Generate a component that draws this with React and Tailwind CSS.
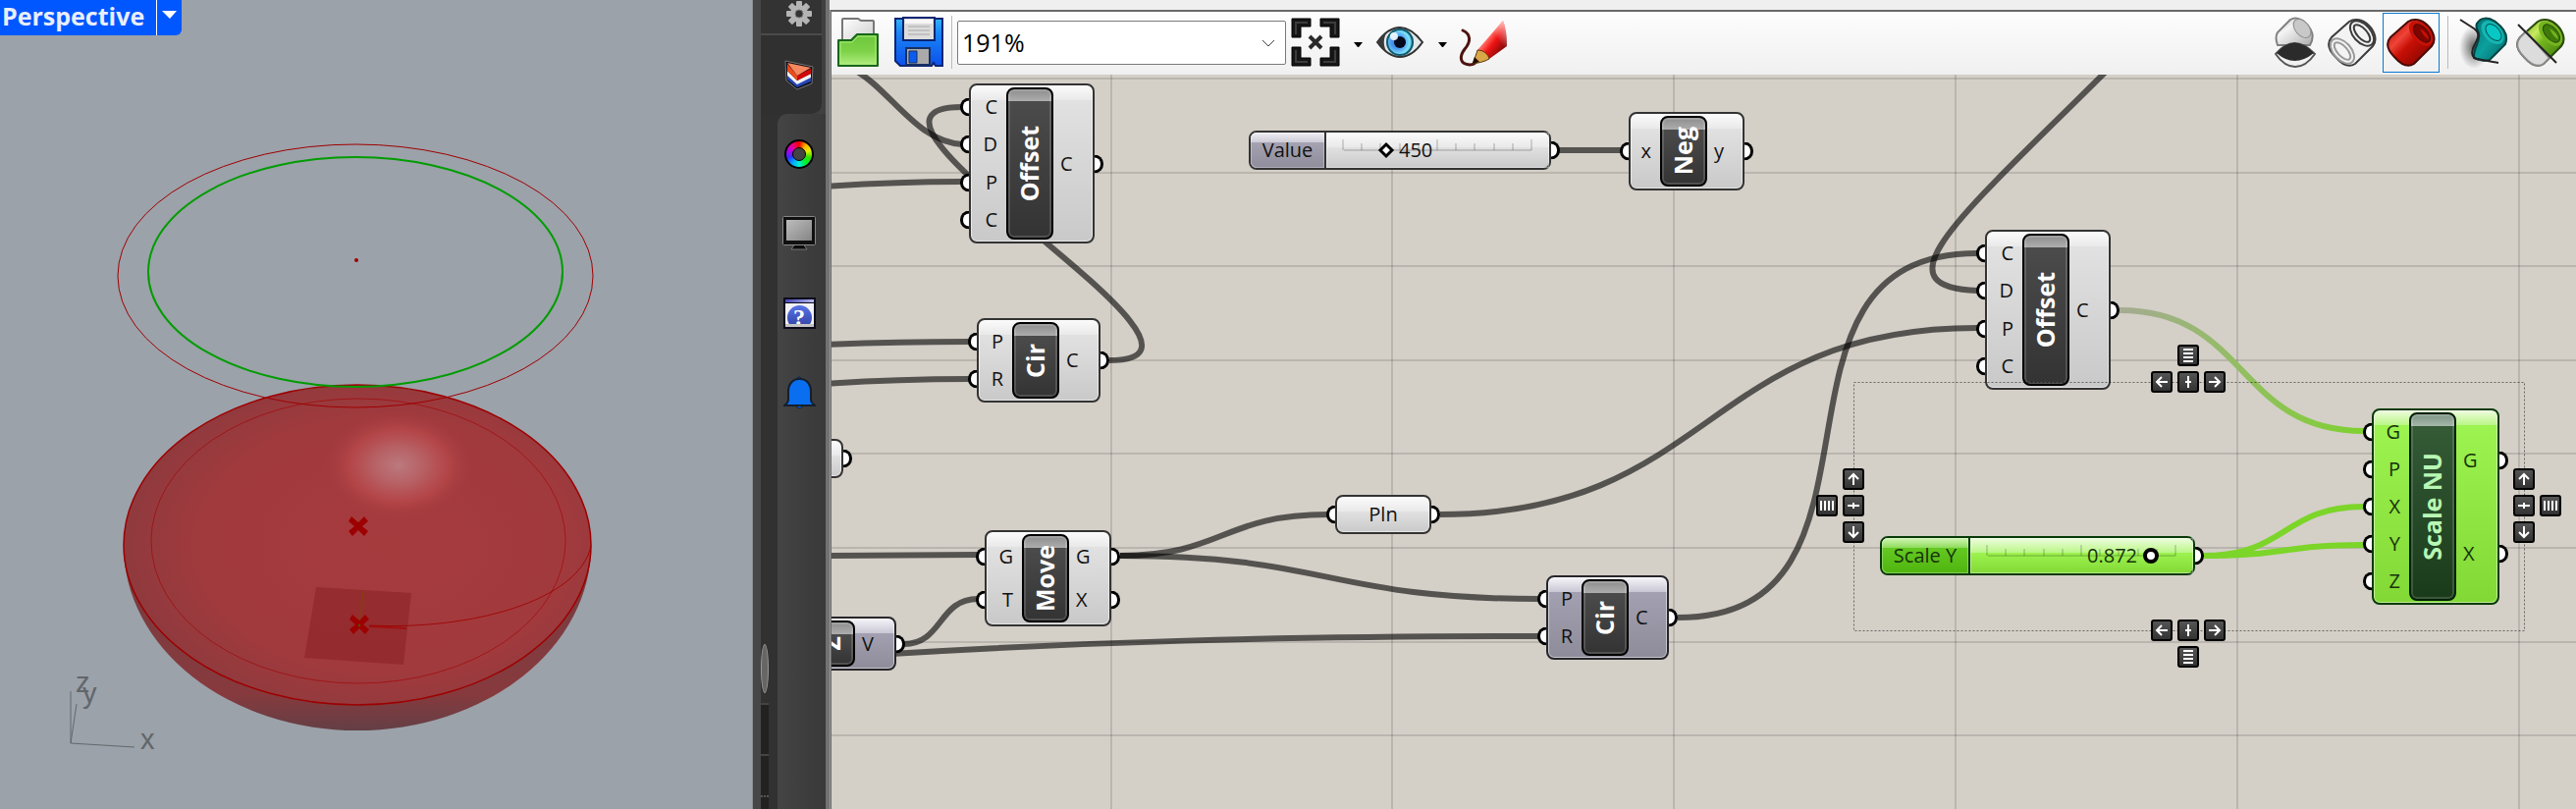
import React from "react";

/* ---------- perspective viewport ---------- */

function Cross({ x, y }) {
  return (
    <path
      transform={`translate(${x} ${y})`}
      d="M-7 -10 L-10 -5 L-4 0 L-10 5 L-6 10 L0 4 L6 10 L10 5 L4 0 L10 -5 L6 -10 L0 -4Z"
      fill="#9d0000"
    />
  );
}

function Viewport() {
  return (
    <section className="relative min-w-0 overflow-hidden bg-[#9ba2aa]">
      <svg viewBox="0 0 766 824" preserveAspectRatio="xMinYMin meet" className="h-full w-full" role="img" aria-label="Perspective scene">
        <defs>
          <linearGradient id="bowl" x1="0" y1="0" x2="0" y2="1">
            <stop offset="0" stopColor="#743c41" />
            <stop offset="0.5" stopColor="#803b3f" />
            <stop offset="0.8" stopColor="#873a3d" />
            <stop offset="1" stopColor="#633f45" />
          </linearGradient>
          <radialGradient id="dome" cx="0.56" cy="0.5" r="0.56">
            <stop offset="0" stopColor="#a63b3e" />
            <stop offset="0.7" stopColor="#a13a3d" />
            <stop offset="1" stopColor="#8f3a3e" />
          </radialGradient>
          <radialGradient id="shine">
            <stop offset="0" stopColor="#bb7a7e" />
            <stop offset="0.35" stopColor="#b96468" stopOpacity="0.9" />
            <stop offset="0.65" stopColor="#b94a4d" stopOpacity="0.75" />
            <stop offset="1" stopColor="#a63b3e" stopOpacity="0" />
          </radialGradient>
        </defs>
        <path d="M126 556 A238 188 0 0 0 602 556Z" fill="url(#bowl)" />
        <ellipse cx="364" cy="555" rx="238" ry="163" fill="url(#dome)" stroke="#9d0000" strokeWidth="1.5" />
        <ellipse cx="406" cy="474" rx="76" ry="56" fill="url(#shine)" />
        <path d="M322 598 L419 604 L411 677 L310 670Z" fill="#8f2629" fillOpacity="0.7" />
        <path d="M370 602 L366 636" stroke="#8a3b18" strokeWidth="2" />
        <path d="M376 638 L414 640" stroke="#a01010" strokeWidth="2" />
        <g fill="none" stroke="#a00000">
          <ellipse cx="365" cy="551" rx="211" ry="145" strokeOpacity="0.6" />
          <path d="M376 637 C480 642 590 612 602 556" strokeOpacity="0.85" />
          <ellipse cx="362" cy="281" rx="242" ry="134" />
        </g>
        <ellipse cx="362" cy="277" rx="211" ry="117" fill="none" stroke="#009c00" strokeWidth="2" />
        <circle cx="363" cy="265" r="2" fill="#9d0000" />
        <Cross x={365} y={536} />
        <Cross x={366} y={636} />
        <circle cx="366" cy="637" r="1" fill="#1b8000" />
        <path d="M72 704 V757 L137 761 M78 717 L72 757" fill="none" stroke="#63686c" />
        <g fill="#62666a" fontFamily="'Liberation Sans', sans-serif" fontSize="29">
          <text x="77" y="705">z</text>
          <text x="84" y="716">y</text>
          <text x="143" y="763">x</text>
        </g>
      </svg>
      <div className="absolute left-0 top-0 flex h-9 items-stretch rounded-br-md bg-[#0057ff]">
        <h1 className="w-[160px] border-r border-white pl-0.5 font-['Open_Sans',sans-serif] text-[25px] font-bold leading-[33px] text-[#e9eefa]">
          Perspective
        </h1>
        <button type="button" aria-label="Viewport menu" className="flex w-[25px] items-start justify-center pt-[11px]">
          <svg viewBox="0 0 15 8" className="h-2 w-[15px]">
            <path d="M0 0 H15 L8 8Z" fill="#fff" />
          </svg>
        </button>
      </div>
    </section>
  );
}

/* ---------- side tabs ---------- */

function GearIcon() {
  return (
    <svg viewBox="-14 -14 28 28" className="size-7">
      <g fill="#b4b4b4">
        {[0, 45, 90, 135].map((a) => (
          <rect key={a} x="-3" y="-13" width="6" height="26" rx="1" transform={`rotate(${a})`} />
        ))}
        <circle r="9" />
      </g>
      <circle r="4" fill="#333" stroke="#777" />
    </svg>
  );
}

function LayersIcon() {
  return (
    <svg viewBox="0 0 30 31" className="h-[31px] w-[30px]">
      <path d="M1 1 L29 7 L28 24 L13 30 L2 21Z" fill="#0b0b14" stroke="#777" />
      <path d="M3 15 L13 24 L27 18 V22 L13 28 L3 20Z" fill="#2546b4" />
      <path d="M3 11 L13 21 L27 14 V18 L13 25 L3 16Z" fill="#f2f2f2" />
      <path d="M13 16 L27 9 V14 L13 21Z" fill="#d40808" />
      <path d="M3 4 L13 16 V21 L3 11Z" fill="#f04a18" />
      <path d="M3 3 L27 8 L13 16Z" fill="#f4885e" />
    </svg>
  );
}

function WheelIcon() {
  return (
    <span className="block size-[30px] rounded-full border-2 border-black bg-[conic-gradient(from_0deg,#f00000,#ffb000,#e8f000,#30e000,#00f030,#00f0d0,#00a8ff,#3030ff,#b000f0,#f00080,#f00000)] p-[6px]">
      <span className="block size-full rounded-full border border-black bg-[#434343]" />
    </span>
  );
}

function MonitorIcon() {
  return (
    <svg viewBox="0 0 34 35" className="h-[35px] w-[34px]">
      <defs>
        <linearGradient id="screen" x1="0" y1="0" x2="1" y2="1">
          <stop offset="0" stopColor="#bdbdbd" />
          <stop offset="1" stopColor="#858585" />
        </linearGradient>
      </defs>
      <path d="M13 28 H21 L25 34 H9Z" fill="#0c0c0c" stroke="#777" />
      <rect x="0.5" y="0.5" width="33" height="29" rx="1" fill="#101010" stroke="#888" />
      <rect x="4" y="4" width="26" height="21" fill="url(#screen)" />
    </svg>
  );
}

function HelpIcon() {
  return (
    <span className="relative block h-8 w-[33px] overflow-hidden border-2 border-[#0c0c1c] bg-[#f2f2f6]">
      <span className="block h-1 border-b border-[#0c0c1c] bg-linear-to-r from-[#4b46b4] to-[#b9b8ec]" />
      <span className="absolute left-0.5 top-1.5 flex size-[25px] items-center justify-center rounded-full bg-linear-to-b from-[#5a74e8] to-[#2c3c9c] font-['Liberation_Serif',serif] text-[24px] font-bold leading-none text-white">
        ?
      </span>
      <span className="absolute inset-x-0 bottom-0 h-[3px] bg-[#c4c4c4]" />
    </span>
  );
}

function BellIcon() {
  return (
    <svg viewBox="0 0 33 34" className="h-[34px] w-[33px]">
      <circle cx="16" cy="3" r="2" fill="#0a6ef0" stroke="#0a1c33" />
      <path d="M12 30 Q16 35 21 30Z" fill="#0a6ef0" stroke="#0a1c33" />
      <path
        d="M16 3 C9 3 5 9 5 15 V24 Q5 27 1 30 H32 Q28 27 28 24 V15 C28 9 24 3 17 3Z"
        fill="#0a6ef0"
        stroke="#14202e"
        strokeWidth="2"
      />
    </svg>
  );
}

function SideTabs() {
  const tabs = [
    ["Materials", WheelIcon],
    ["Display", MonitorIcon],
    ["Help", HelpIcon],
    ["Notifications", BellIcon],
  ];
  return (
    <aside className="flex overflow-hidden border-l border-[#8a8d90] bg-[#474747]">
      <div className="ml-2 flex w-[66px] flex-col bg-[#404040]">
        <button type="button" aria-label="Settings" className="flex h-9 w-[62px] shrink-0 items-start justify-center border-b-2 border-[#4a4a4a] bg-[#333] pl-4">
          <GearIcon />
        </button>
        <div className="flex flex-1 flex-col bg-[#313131]">
          <div className="bg-[#404040]">
            <button type="button" aria-label="Layers" className="flex h-20 w-[62px] items-center justify-center rounded-br-[10px] bg-[#303030] pl-4">
              <LayersIcon />
            </button>
          </div>
          <div className="flex flex-1">
            <div className="flex w-[17px] shrink-0 flex-col justify-end">
              <span className="mb-2.5 h-[50px] w-2 rounded-[50%] border border-[#999] bg-[#666]" />
              <span className="h-[52px] w-2 border-t-2 border-[#444] bg-[#222]" />
              <span className="h-[56px] w-2 border-t-2 border-[#444] bg-[#222] pt-10">
                <span className="block border-t-2 border-dotted border-[#555]" />
              </span>
            </div>
            <nav className="flex flex-1 flex-col rounded-tl-[10px] bg-linear-to-r from-[#444] to-[#393939] pr-[5px]">
              {tabs.map(([label, Icon]) => (
                <button key={label} type="button" aria-label={label} className="flex h-[81px] items-center justify-center">
                  <Icon />
                </button>
              ))}
            </nav>
          </div>
        </div>
      </div>
      <div className="w-1 bg-[#727272]" />
    </aside>
  );
}

/* ---------- toolbar ---------- */

function OpenIcon() {
  return (
    <svg viewBox="0 0 44 52" className="h-[52px] w-11">
      <defs>
        <linearGradient id="folder" x1="0" y1="0" x2="0" y2="1">
          <stop offset="0" stopColor="#6cc63c" />
          <stop offset="0.55" stopColor="#7fd348" />
          <stop offset="1" stopColor="#b2ee86" />
        </linearGradient>
        <linearGradient id="sheet" x1="0" y1="0" x2="1" y2="1">
          <stop offset="0" stopColor="#fff" />
          <stop offset="1" stopColor="#c9c9c9" />
        </linearGradient>
      </defs>
      <path d="M6 30 V3 Q6 2 7 2 H22 L25 4 H37 Q38 4 38 5 V30Z" fill="url(#sheet)" stroke="#777" strokeWidth="2" />
      <path d="M2 24 H15 L21 18 H42 V50 H2Z" fill="url(#folder)" stroke="#16661a" strokeWidth="2" strokeLinejoin="round" />
      <path d="M4 26 H16 L22 20 H40 V48 H4Z" fill="none" stroke="#a8ea76" />
    </svg>
  );
}

function SaveIcon() {
  return (
    <svg viewBox="0 0 50 52" className="h-[52px] w-[50px]">
      <defs>
        <linearGradient id="disk" x1="0" y1="0" x2="0" y2="1">
          <stop offset="0" stopColor="#34b4f6" />
          <stop offset="0.3" stopColor="#1b86f5" />
          <stop offset="1" stopColor="#0b50ec" />
        </linearGradient>
      </defs>
      <path d="M1 2 H49 V50 H42 L40 47 L38 50 H6 L1 45Z" fill="url(#disk)" stroke="#0b2573" strokeWidth="2" />
      <path d="M9 1 H41 V24 H9Z" fill="#dcdcdc" stroke="#0b2573" strokeWidth="2" />
      <path d="M11 3 H39 V7 H11Z" fill="#f6f6f6" />
      <path d="M14 10 H36 M14 14 H36 M14 18 H36" stroke="#c2c2c2" strokeWidth="2" />
      <path d="M12 32 H36 V49 H12Z" fill="#aaa" stroke="#173063" strokeWidth="2" />
      <path d="M15 35 H23 V47 H15Z" fill="#0d5cf0" stroke="#173063" />
    </svg>
  );
}

function ExtentsIcon() {
  return (
    <svg viewBox="0 0 50 50" className="size-[50px]">
      <g fill="#161616" stroke="#000">
        <path d="M1 1 H20 V9 H10 V20 H1Z" />
        <path d="M49 1 H30 V9 H40 V20 H49Z" />
        <path d="M1 49 H20 V41 H10 V30 H1Z" />
        <path d="M49 49 H30 V41 H40 V30 H49Z" />
      </g>
      <path d="M5 17 V5 H17 M33 5 H45 V17 M5 33 V45 H17 M33 45 H45 V33" fill="none" stroke="#3c3c3c" strokeWidth="2" />
      <path d="M19 19 L31 31 M31 19 L19 31" stroke="#2a2a2a" strokeWidth="4" />
    </svg>
  );
}

function EyeIcon() {
  return (
    <svg viewBox="0 0 50 34" className="h-[34px] w-[50px]">
      <defs>
        <radialGradient id="iris" cx="0.4" cy="0.5" r="0.6">
          <stop offset="0" stopColor="#2d6fd8" />
          <stop offset="0.45" stopColor="#4d9df0" />
          <stop offset="0.8" stopColor="#7fe4f6" />
          <stop offset="1" stopColor="#2a93b8" />
        </radialGradient>
      </defs>
      <path d="M2 17 C10 6 18 2 25 2 C33 2 41 8 48 17 C41 27 33 32 25 32 C18 32 10 28 2 17Z" fill="#e4e8ea" stroke="#333" strokeWidth="2" />
      <path d="M2 17 C5 13 8 10 11 8 C8 14 8 20 11 26 C8 24 5 21 2 17Z" fill="#3a3a3a" />
      <circle cx="25" cy="17" r="13" fill="url(#iris)" stroke="#0f5a70" strokeWidth="2" />
      <circle cx="25" cy="17" r="6" fill="#04091c" />
      <circle cx="19" cy="11" r="4" fill="#fff" fillOpacity="0.85" />
    </svg>
  );
}

function SketchIcon() {
  return (
    <svg viewBox="0 0 52 52" className="size-[52px]">
      <defs>
        <linearGradient id="pencil" x1="0.2" y1="0.2" x2="0.8" y2="0.8">
          <stop offset="0" stopColor="#9d1414" />
          <stop offset="0.35" stopColor="#ff6a62" />
          <stop offset="0.6" stopColor="#f01414" />
          <stop offset="1" stopColor="#8d0a0a" />
        </linearGradient>
        <linearGradient id="fade" x1="0" y1="1" x2="1" y2="0">
          <stop offset="0.6" stopColor="#fff" stopOpacity="0" />
          <stop offset="1" stopColor="#fff" stopOpacity="0.75" />
        </linearGradient>
      </defs>
      <path d="M5 14 C14 18 13 26 7 33 C1 41 2 48 12 49 C17 49 19 46 20 43" fill="none" stroke="#4d1210" strokeWidth="3" strokeLinecap="round" />
      <path d="M20 34 L46 4 Q50 14 50 30 L32 43Z" fill="url(#pencil)" />
      <path d="M20 34 L46 4 Q50 14 50 30 L32 43Z" fill="url(#fade)" />
      <path d="M20 34 C19 38 17 42 15 48 C21 47 27 46 32 43 C31 38 26 34 20 34Z" fill="#d9a648" stroke="#5e3710" />
      <path d="M15 48 L17 41 L22 46Z" fill="#220b04" />
    </svg>
  );
}

const TUBE =
  "M22 4 L4 20 C-1 26 1 33 8 40 C15 48 22 51 28 47 L46 29 C51 23 48 14 42 8 C36 2 28 0 22 4Z";

function ShadedTube({ id, light, mid, dark, line }) {
  return (
    <>
      <defs>
        <linearGradient id={id} x1="0" y1="0.2" x2="0.8" y2="1">
          <stop offset="0" stopColor={mid} />
          <stop offset="0.3" stopColor={light} />
          <stop offset="0.5" stopColor={mid} />
          <stop offset="1" stopColor={dark} />
        </linearGradient>
      </defs>
      <path d={TUBE} fill={`url(#${id})`} stroke={line} strokeWidth="2" />
      <ellipse cx="35" cy="16" rx="15" ry="9" transform="rotate(48 35 16)" fill={mid} />
      <ellipse cx="36" cy="16" rx="11" ry="6" transform="rotate(48 36 16)" fill={dark} stroke={line} />
      <path d="M34 11 Q42 15 43 22 Q38 20 34 11Z" fill={mid} />
    </>
  );
}

function GreyTubeIcon() {
  return (
    <svg viewBox="0 0 42 52" className="h-[52px] w-[42px]">
      <defs>
        <linearGradient id="pale" x1="0" y1="0" x2="1" y2="1">
          <stop offset="0" stopColor="#b4b4b4" />
          <stop offset="0.35" stopColor="#f4f4f4" />
          <stop offset="1" stopColor="#adadad" />
        </linearGradient>
      </defs>
      <path d="M16 3 L3 16 Q0 21 3 29 L36 29 Q40 22 38 16 C34 6 24 -2 16 3Z" fill="url(#pale)" stroke="#808080" strokeWidth="2" />
      <ellipse cx="28" cy="12" rx="11" ry="7" transform="rotate(50 28 12)" fill="#c8c8c8" stroke="#8c8c8c" />
      <path d="M1 38 Q20 16 41 38 Q32 51 21 51 Q10 51 1 38Z" fill="#f1f1f1" stroke="#555" strokeWidth="2" />
      <path d="M2 37 Q20 16 40 37 Q20 53 2 37Z" fill="#2b2b2b" />
    </svg>
  );
}

function WireTubeIcon() {
  return (
    <svg viewBox="0 0 50 50" className="size-[50px]" fill="none" stroke="#3c3c3c" strokeWidth="2">
      <path d={TUBE} fill="#f3f3f3" />
      <ellipse cx="35" cy="16" rx="15" ry="9" transform="rotate(48 35 16)" />
      <ellipse cx="35" cy="16" rx="11" ry="5" transform="rotate(48 35 16)" />
      <g stroke="#9a9a9a">
        <ellipse cx="15" cy="34" rx="15" ry="9" transform="rotate(48 15 34)" />
        <ellipse cx="15" cy="34" rx="11" ry="5" transform="rotate(48 15 34)" />
      </g>
    </svg>
  );
}

function RedTubeIcon() {
  return (
    <svg viewBox="0 0 50 50" className="size-[50px]">
      <ShadedTube id="redTube" light="#ee4438" mid="#c81006" dark="#7e0400" line="#4a0a06" />
    </svg>
  );
}

function TealTubeIcon() {
  return (
    <svg viewBox="0 0 50 52" className="h-[52px] w-[50px]">
      <defs>
        <radialGradient id="tealShadow">
          <stop offset="0" stopColor="#444" stopOpacity="0.85" />
          <stop offset="1" stopColor="#555" stopOpacity="0" />
        </radialGradient>
        <linearGradient id="teal" x1="0" y1="0" x2="1" y2="1">
          <stop offset="0.1" stopColor="#067a7a" />
          <stop offset="0.5" stopColor="#0ca09e" />
          <stop offset="1" stopColor="#046464" />
        </linearGradient>
      </defs>
      <ellipse cx="15" cy="31" rx="15" ry="22" fill="url(#tealShadow)" />
      <path d="M18 7 C22 0 30 0 38 6 C46 12 50 20 47 28 L31 44 C26 46 20 44 15 42 C14 32 22 26 20 17 C19 13 16 11 18 7Z" fill="url(#teal)" stroke="#044" strokeWidth="2" />
      <ellipse cx="34" cy="16" rx="14" ry="9" transform="rotate(48 34 16)" fill="#15b5b2" />
      <ellipse cx="35" cy="16" rx="10" ry="6" transform="rotate(48 35 16)" fill="#07c8c4" stroke="#055" />
      <path d="M1 3 L15 12 C22 17 19 22 16 28 C12 35 12 41 18 43 L40 47" fill="none" stroke="#222" strokeWidth="2" />
    </svg>
  );
}

function GreenTubeIcon() {
  return (
    <svg viewBox="0 0 50 50" className="size-[50px]">
      <ShadedTube id="greenTube" light="#c9ea62" mid="#74b51e" dark="#3e7a0a" line="#2b4a0c" />
      <path d="M10 14 L4 20 C-1 26 1 33 8 40 C15 48 22 51 28 47 L34 41Z" fill="#dcdcdc" stroke="#8a8a8a" strokeWidth="2" />
      <path d="M2 7 L41 46" stroke="#222" strokeWidth="2" />
    </svg>
  );
}

function ToolButton({ label, className, children }) {
  return (
    <button type="button" aria-label={label} className={`flex shrink-0 items-center justify-center ${className}`}>
      {children}
    </button>
  );
}

function Caret() {
  return (
    <svg viewBox="0 0 9 5" className="h-[5px] w-[9px]">
      <path d="M0 0 H9 L5 5 H4Z" fill="#000" />
    </svg>
  );
}

function Toolbar() {
  return (
    <div className="flex h-[64px] shrink-0 items-center overflow-hidden bg-linear-to-b from-[#fdfdfd] to-[#f0f0f0] pb-0.5">
      <ToolButton label="Open file" className="ml-[5px]"><OpenIcon /></ToolButton>
      <ToolButton label="Save file" className="ml-[15px]"><SaveIcon /></ToolButton>
      <span className="ml-2 h-[54px] w-px shrink-0 bg-[#bbb]" />
      <div className="relative ml-[5px] shrink-0">
        <select
          aria-label="Zoom"
          defaultValue="191%"
          className="block h-[45px] w-[335px] appearance-none rounded-xs border border-[#7a7a7a] bg-white pl-1 font-['Open_Sans',sans-serif] text-[25px] leading-8 text-black"
        >
          <option>191%</option>
          <option>100%</option>
        </select>
        <svg viewBox="0 0 14 8" className="pointer-events-none absolute right-[11px] top-[19px] h-2 w-3.5">
          <path d="M1 1 L7 7 L13 1" fill="none" stroke="#444" />
        </svg>
      </div>
      <ToolButton label="Zoom extents" className="ml-[5px]"><ExtentsIcon /></ToolButton>
      <ToolButton label="Zoom extents options" className="ml-[14px] pt-1"><Caret /></ToolButton>
      <ToolButton label="Preview" className="ml-[13px]"><EyeIcon /></ToolButton>
      <ToolButton label="Preview options" className="ml-[14px] pt-1"><Caret /></ToolButton>
      <ToolButton label="Sketch" className="ml-[11px]"><SketchIcon /></ToolButton>
      <ToolButton label="No preview" className="ml-auto"><GreyTubeIcon /></ToolButton>
      <ToolButton label="Wireframe preview" className="ml-3"><WireTubeIcon /></ToolButton>
      <ToolButton label="Shaded preview" className="ml-1.5 h-[61px] w-[58px] border border-[#0b79d0]"><RedTubeIcon /></ToolButton>
      <span className="ml-2 h-[54px] w-px shrink-0 bg-[#bbb]" />
      <ToolButton label="Preview selected" className="ml-[11px]"><TealTubeIcon /></ToolButton>
      <ToolButton label="Preview settings" className="ml-2 mr-[11px]"><GreenTubeIcon /></ToolButton>
    </div>
  );
}

/* ---------- definition canvas ---------- */

const GREY = {
  body: "border-[#333] bg-[linear-gradient(#fbfbfb_0px,#e9e9e9_15px,#e1e1e1_15px,#c9c9c9_100%)]",
  bar: "border-black bg-[linear-gradient(#8d8d8d_0px,#adadad_12px,#4b4b4b_12px,#333_100%)] text-white",
  text: "text-[#111]",
};
const DIM = {
  body: "border-[#26262a] bg-[linear-gradient(#f6f5fa_0px,#c9c7d3_15px,#a3a1b1_15px,#8e8c9a_100%)]",
  bar: GREY.bar,
  text: "text-[#111]",
};
const GREEN = {
  body: "border-[#063a06] bg-[linear-gradient(#effde0_0px,#baf686_15px,#9df350_15px,#82d834_100%)]",
  bar: "border-[#031f05] bg-[linear-gradient(#7f9485_0px,#a5b8aa_12px,#345a36_12px,#1a3b1a_100%)] text-[#b8f7b4]",
  text: "text-[#16330a]",
};

function Port({ side }) {
  const place =
    side === "in"
      ? "-left-[11px] rounded-l-full border-r-0"
      : "-right-[11px] rounded-r-full border-l-0";
  return <span className={`absolute top-1/2 h-[19px] w-[9px] -translate-y-1/2 border-[3px] border-black bg-white ${place}`} />;
}

function Ports({ names, side, className }) {
  return (
    <ul className={`flex flex-col py-[3px] ${className}`}>
      {names.map((name, i) => (
        <li key={i} className={`relative flex flex-1 items-center ${side === "in" ? "justify-end pr-[9px]" : "pl-[7px]"}`}>
          <Port side={side} />
          {name}
        </li>
      ))}
    </ul>
  );
}

function Component({ place, title, inputs, outputs, tone = GREY, inset = "w-9" }) {
  return (
    <article
      className={`absolute flex rounded-lg border-2 font-['Open_Sans',sans-serif] text-[20px] leading-6 shadow-[inset_0_0_0_1px_rgba(255,255,255,0.5)] ${tone.body} ${tone.text} ${place}`}
    >
      <Ports names={inputs} side="in" className={`shrink-0 ${inset}`} />
      <h2
        className={`my-0.5 flex w-12 shrink-0 items-center justify-center rounded-lg border-2 pr-0.5 text-[25px] font-bold leading-8 shadow-[inset_0_0_0_2px_rgba(255,255,255,0.15)] ${tone.bar}`}
      >
        <span className="rotate-180 [writing-mode:vertical-rl]">{title}</span>
      </h2>
      <Ports names={outputs} side="out" className="flex-1" />
    </article>
  );
}

function Param({ place, name }) {
  return (
    <article
      className={`absolute flex items-center justify-center rounded-lg border-2 font-['Open_Sans',sans-serif] text-[20px] leading-6 shadow-[inset_0_0_0_1px_rgba(255,255,255,0.5)] ${GREY.body} ${GREY.text} ${place}`}
    >
      <Port side="in" />
      {name}
      <Port side="out" />
    </article>
  );
}

function NumberSlider({ place, name, value, min, max, step, tone, labelTone, valuePlace, children }) {
  const id = `slider-${name.replace(" ", "-").toLowerCase()}`;
  return (
    <article className={`absolute flex rounded-lg border-2 font-['Open_Sans',sans-serif] text-[20px] leading-6 ${tone.body} ${tone.text} ${place}`}>
      <label htmlFor={id} className={`flex shrink-0 items-center justify-center rounded-l-md border-r-2 shadow-[inset_0_0_0_1px_rgba(255,255,255,0.3)] ${labelTone}`}>
        {name}
      </label>
      <div className="relative flex flex-1 items-center shadow-[inset_0_0_0_1px_rgba(255,255,255,0.4)]">
        <svg className="absolute inset-0 h-full w-full overflow-visible">
          <path d="M18 18 H209" stroke="#000" strokeOpacity="0.14" strokeWidth="2" />
          {Array.from({ length: 11 }, (_, i) => (
            <path
              key={i}
              d={`M${17 + Math.round(i * 19.2)} ${i % 5 === 0 ? 7 : 11} V18`}
              stroke="#000"
              strokeOpacity="0.14"
              strokeWidth="2"
            />
          ))}
          {children}
        </svg>
        <output htmlFor={id} className={`relative ${valuePlace}`}>{value}</output>
        <input id={id} type="range" min={min} max={max} step={step} defaultValue={value} className="absolute inset-0 h-full w-full cursor-pointer opacity-0" />
      </div>
      <Port side="out" />
    </article>
  );
}

const GLYPHS = {
  up: "M0 6 V-5 M-5 0 L0 -5 L5 0",
  down: "M0 -6 V5 M-5 0 L0 5 L5 0",
  left: "M6 0 H-5 M0 -5 L-5 0 L0 5",
  right: "M-6 0 H5 M0 -5 L5 0 L0 5",
  centerX: "M0 -6 V6 M-3 0 H3 M-1 -1 H1 M-1 1 H1",
  centerY: "M-6 0 H6 M0 -3 V3 M-1 -1 V1 M1 -1 V1",
  rows: "M-5 -6 H5 M-5 -2 H5 M-5 2 H5 M-5 6 H5",
  columns: "M-6 -5 V5 M-2 -5 V5 M2 -5 V5 M6 -5 V5",
};

function AlignButton({ kind, label }) {
  return (
    <button type="button" aria-label={label} className="flex size-[22px] shrink-0 items-center justify-center rounded-[3px] border-2 border-black bg-linear-to-b from-[#555] to-[#333]">
      <svg viewBox="-9 -9 18 18" className="size-[18px]">
        <path d={GLYPHS[kind]} fill="none" stroke="#fff" strokeWidth="2" />
      </svg>
    </button>
  );
}

function AlignRow() {
  return (
    <div className="flex gap-[5px]">
      <AlignButton kind="left" label="Align left" />
      <AlignButton kind="centerX" label="Align horizontal centres" />
      <AlignButton kind="right" label="Align right" />
    </div>
  );
}

function AlignColumn() {
  return (
    <div className="flex flex-col gap-[5px]">
      <AlignButton kind="up" label="Align top" />
      <AlignButton kind="centerY" label="Align vertical centres" />
      <AlignButton kind="down" label="Align bottom" />
    </div>
  );
}

function Wires() {
  return (
    <svg className="absolute inset-0 h-full w-full" aria-hidden="true">
      <defs>
        <linearGradient id="toSelected" gradientUnits="userSpaceOnUse" x1="2159" y1="0" x2="2407" y2="0">
          <stop offset="0" stopColor="#a5ab93" />
          <stop offset="1" stopColor="#7fd130" />
        </linearGradient>
      </defs>
      <g transform="translate(-847 -76)" fill="none">
        <g stroke="#000" strokeOpacity="0.12" strokeWidth="2">
          {[80, 176, 271, 367, 462, 558, 654, 749].map((y) => (
            <path key={y} d={`M847 ${y} H4000`} />
          ))}
          {[1132, 1418, 1705, 1992, 2279, 2566].map((x) => (
            <path key={x} d={`M${x} 76 V2000`} />
          ))}
        </g>
        <g stroke="#000" strokeOpacity="0.6" strokeWidth="6">
          <path d="M868 70 C907 90 932 144 980 147" />
          <path d="M1130 367 C1288 367 821 109 980 109" />
          <path d="M840 190 Q910 185 980 185" />
          <path d="M840 351 Q910 348 988 348" />
          <path d="M840 391 Q910 386 988 386" />
          <path d="M840 566 L996 565" />
          <path d="M921 656 C960 656 956 610 996 610" />
          <path d="M890 667 C1100 654 1300 648 1567 648" />
          <path d="M1141 566 C1246 566 1246 524 1352 524" />
          <path d="M1141 566 C1353 566 1353 610 1567 610" />
          <path d="M1467 524 C1744 524 1736 334 2014 334" />
          <path d="M1709 629 C1950 629 1772 258 2014 258" />
          <path d="M2152 66 C2000 218 1908 292 2014 296" />
          <path d="M1588 153 H1652" />
        </g>
        <path d="M2159 316 C2290 316 2278 439 2408 439" stroke="url(#toSelected)" strokeWidth="6" />
        <path d="M2245 566 C2330 566 2325 516 2408 516 M2245 566 C2330 566 2325 555 2408 555" stroke="#7cd529" strokeWidth="6" />
      </g>
    </svg>
  );
}

function Canvas() {
  return (
    <main className="relative flex-1 overflow-hidden bg-[#d4cfc7]">
      <Wires />
      <Component place="left-[140px] top-[9px] h-[163px] w-[128px]" title="Offset" inputs={["C", "D", "P", "C"]} outputs={["C"]} />
      <Component place="left-[148px] top-[248px] h-[86px] w-[126px]" title="Cir" inputs={["P", "R"]} outputs={["C"]} inset="w-[34px]" />
      <NumberSlider
        place="left-[425px] top-[57px] h-10 w-[308px]"
        name="Value" value="450" min="0" max="1500" step="1" tone={GREY}
        labelTone="w-[77px] border-[#333] bg-[linear-gradient(#f0eff5_0px,#cdccd6_10px,#a5a3b2_10px,#8f8d9b_100%)]"
        valuePlace="pl-[74px]"
      >
        <path d="M61 12 L67 18 L61 24 L55 18Z" fill="#fff" stroke="#000" strokeWidth="3" />
      </NumberSlider>
      <Component place="left-[812px] top-[38px] h-20 w-[118px]" title="Neg" inputs={["x"]} outputs={["y"]} inset="w-[30px]" />
      <Param place="-left-[88px] top-[371px] h-10 w-[100px]" />
      <Component place="left-[156px] top-[464px] h-[98px] w-[129px]" title="Move" inputs={["G", "T"]} outputs={["G", "X"]} />
      <Component place="-left-[60px] top-[552px] h-[55px] w-[126px]" title="Z" inputs={[]} outputs={["V"]} inset="w-[34px]" tone={DIM} />
      <Param place="left-[513px] top-[428px] h-10 w-[98px]" name="Pln" />
      <Component place="left-[728px] top-[510px] h-[86px] w-[125px]" title="Cir" inputs={["P", "R"]} outputs={["C"]} inset="w-[34px]" tone={DIM} />
      <Component place="left-[1175px] top-[158px] h-[163px] w-[128px]" title="Offset" inputs={["C", "D", "P", "C"]} outputs={["C"]} />
      <NumberSlider
        place="left-[1068px] top-[470px] h-10 w-[321px]"
        name="Scale Y" value="0.872" min="0" max="1" step="0.001" tone={GREEN}
        labelTone="w-[90px] border-[#063a06] bg-[linear-gradient(#d0f5b4_0px,#8edb5c_10px,#64c922_10px,#50b40e_100%)]"
        valuePlace="pl-[119px]"
      >
        <circle cx="184" cy="18" r="6" fill="#fff" stroke="#000" strokeWidth="4" />
      </NumberSlider>
      <Component place="left-[1569px] top-[340px] h-[200px] w-[130px]" title="Scale NU" inputs={["G", "P", "X", "Y", "Z"]} outputs={["G", "X"]} tone={GREEN} />

      <svg className="pointer-events-none absolute left-[1041px] top-[313px] h-[254px] w-[684px]" aria-hidden="true">
        <rect x="0.5" y="0.5" width="683" height="253" fill="none" stroke="#000" strokeOpacity="0.5" strokeDasharray="2 2" />
      </svg>
      <div className="absolute left-[1344px] top-[275px] flex flex-col items-center gap-[5px]">
        <AlignButton kind="rows" label="Distribute horizontally" />
        <AlignRow />
      </div>
      <div className="absolute left-[1344px] top-[555px] flex flex-col items-center gap-[5px]">
        <AlignRow />
        <AlignButton kind="rows" label="Distribute horizontally" />
      </div>
      <div className="absolute left-[1003px] top-[401px] flex items-center gap-[5px]">
        <AlignButton kind="columns" label="Distribute vertically" />
        <AlignColumn />
      </div>
      <div className="absolute left-[1713px] top-[401px] flex items-center gap-[5px]">
        <AlignColumn />
        <AlignButton kind="columns" label="Distribute vertically" />
      </div>
    </main>
  );
}

export default function App() {
  return (
    <div className="grid h-screen grid-cols-[766fr_79px_1779fr] overflow-hidden">
      <Viewport />
      <SideTabs />
      <section className="flex min-w-0 flex-col bg-[#efefef] pt-2.5">
        <div className="flex flex-1 border-l border-[#999]">
          <div className="flex min-w-0 flex-1 flex-col border-l border-t-2 border-[#6a6a6a]">
            <Toolbar />
            <Canvas />
          </div>
        </div>
      </section>
    </div>
  );
}
